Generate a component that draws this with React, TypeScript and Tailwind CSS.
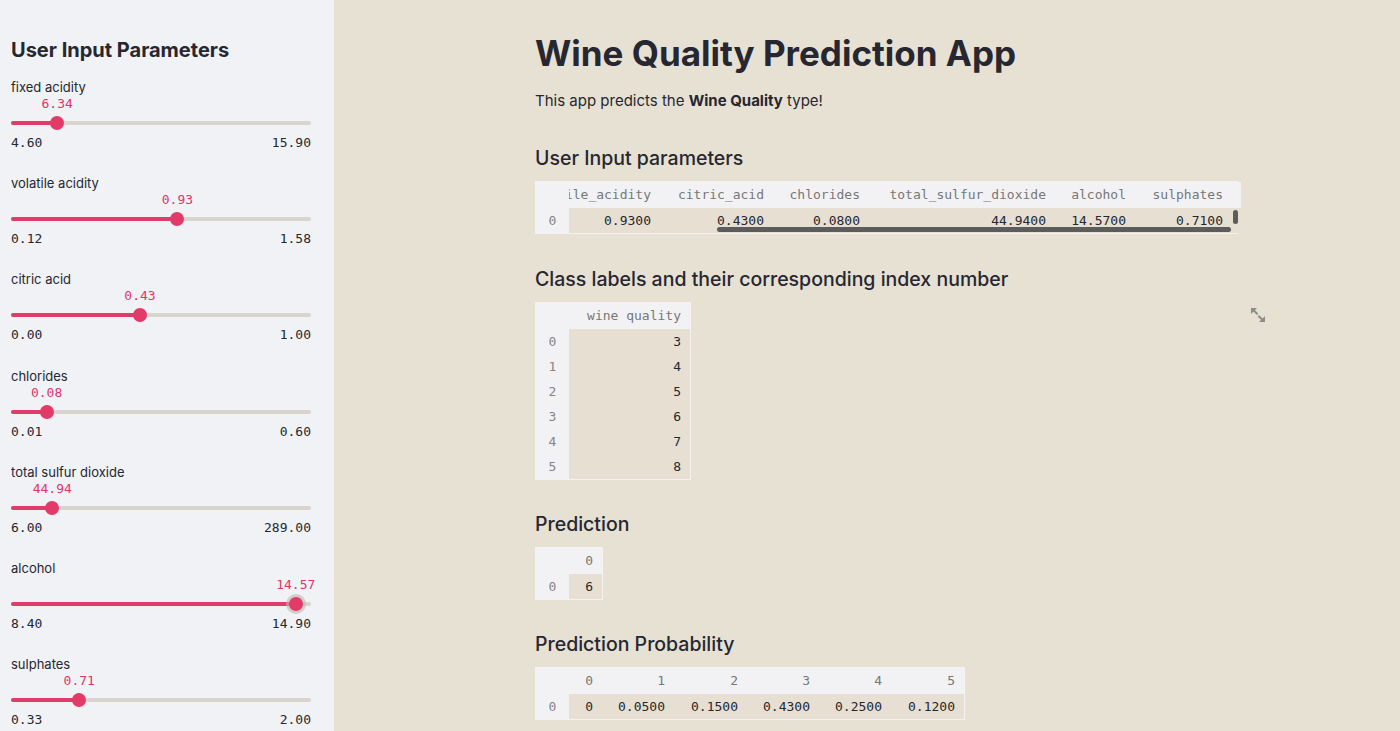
import React from "react";

const sans = { fontFamily: "Inter, 'Noto Sans', sans-serif" };
const mono = { fontFamily: "'DejaVu Sans Mono', 'Liberation Mono', monospace" };

type SliderProps = { label: string; min: number; max: number; value: number; focus?: boolean };

function Slider({ label, min, max, value, focus }: SliderProps) {
  const pct = ((value - min) / (max - min)) * 100;
  return (
    <div className="mb-[23.2px]">
      <div className="h-[19px] text-[13px] leading-[18px] text-[#262730]">{label}</div>
      <div className="relative h-[14px]">
        <span
          className="absolute top-0 -translate-x-1/2 whitespace-nowrap text-[13px] leading-[14px] text-[#e0356a]"
          style={{ ...mono, left: `${pct}%` }}
        >
          {value.toFixed(2)}
        </span>
      </div>
      <div className="relative h-[24px]">
        <div className="absolute left-0 right-0 top-[10px] h-[4px] rounded-full bg-[#d9d5cc]" />
        <div className="absolute left-0 top-[10px] h-[4px] rounded-full bg-[#e23b69]" style={{ width: `${pct}%` }} />
        <div
          className={
            "absolute top-[5px] h-[14px] w-[14px] -translate-x-1/2 rounded-full bg-[#e23b69]" +
            (focus ? " ring-[3px] ring-[#bdb6b0]/60" : "")
          }
          style={{ left: `${pct}%` }}
        />
      </div>
      <div className="flex h-[16px] justify-between text-[13px] leading-[16px] text-[#262730]" style={mono}>
        <span>{min.toFixed(2)}</span>
        <span>{max.toFixed(2)}</span>
      </div>
    </div>
  );
}

type Col = { w: number; head: string; vals: string[] };

function DataTable({ cols, index, extra }: { cols: Col[]; index: string[]; extra?: React.ReactNode }) {
  return (
    <div className="relative inline-flex border border-[#f4f3f1] text-[13px]" style={mono}>
      <div className="flex w-[33px] flex-col bg-[#f2f2f5]">
        <div className="h-[26px]" />
        {index.map((ix) => (
          <div key={ix} className="flex h-[25px] items-center justify-center text-[#858585]">
            {ix}
          </div>
        ))}
      </div>
      {cols.map((c, ci) => (
        <div key={ci} className="flex flex-col" style={{ width: c.w }}>
          <div className="flex h-[26px] items-center justify-end overflow-hidden whitespace-nowrap bg-[#f2f2f5] pr-[9px] text-[#777777]">
            {c.head}
          </div>
          {c.vals.map((v, vi) => (
            <div key={vi} className="flex h-[25px] items-center justify-end bg-[#e6dfd2] pr-[9px] text-[#262730]">
              {v}
            </div>
          ))}
        </div>
      ))}
      {extra}
    </div>
  );
}

function ExpandIcon() {
  return (
    <svg width="16" height="16" viewBox="0 0 16 16" fill="#8c8c8c">
      <polygon points="1,1 7,1 1,7" />
      <rect x="2.5" y="4.2" width="6" height="2" transform="rotate(45 5.5 5.2)" />
      <polygon points="15,15 9,15 15,9" />
      <rect x="7.5" y="9.8" width="6" height="2" transform="rotate(45 10.5 10.8)" />
    </svg>
  );
}

export default function App() {
  const sliders: SliderProps[] = [
    { label: "fixed acidity", min: 4.6, max: 15.9, value: 6.34 },
    { label: "volatile acidity", min: 0.12, max: 1.58, value: 0.93 },
    { label: "citric acid", min: 0, max: 1, value: 0.43 },
    { label: "chlorides", min: 0.01, max: 0.6, value: 0.08 },
    { label: "total sulfur dioxide", min: 6, max: 289, value: 44.94 },
    { label: "alcohol", min: 8.4, max: 14.9, value: 14.57, focus: true },
    { label: "sulphates", min: 0.33, max: 2, value: 0.71 },
  ];

  const inputCols: Col[] = [
    { w: 91, head: "volatile_acidity", vals: ["0.9300"] },
    { w: 113, head: "citric_acid", vals: ["0.4300"] },
    { w: 96, head: "chlorides", vals: ["0.0800"] },
    { w: 186, head: "total_sulfur_dioxide", vals: ["44.9400"] },
    { w: 80, head: "alcohol", vals: ["14.5700"] },
    { w: 97, head: "sulphates", vals: ["0.7100"] },
    { w: 5, head: "", vals: [""] },
  ];

  const probCols: Col[] = [
    { w: 33, head: "0", vals: ["0"] },
    { w: 72, head: "1", vals: ["0.0500"] },
    { w: 73, head: "2", vals: ["0.1500"] },
    { w: 72, head: "3", vals: ["0.4300"] },
    { w: 72, head: "4", vals: ["0.2500"] },
    { w: 73, head: "5", vals: ["0.1200"] },
  ];

  return (
    <div className="flex h-[731px] w-[1400px] overflow-hidden bg-[#e7e1d4] text-[#262730]" style={sans}>
      <aside className="h-full w-[334px] shrink-0 bg-[#f0f2f6] pl-[11px] pr-[23px] pt-[36px]">
        <h2 className="mb-[14px] text-[20px] font-bold leading-[28px]">User Input Parameters</h2>
        {sliders.map((s) => (
          <Slider key={s.label} {...s} />
        ))}
      </aside>

      <main className="flex-1 pl-[201px] pt-[31px]">
        <h1 className="text-[35px] font-bold leading-[44px]">Wine Quality Prediction App</h1>
        <p className="mt-[14px] text-[15px] leading-[24px]">
          This app predicts the <b>Wine Quality</b> type!
        </p>

        <h3 className="mt-[31px] text-[19.5px] font-medium leading-[28px]">User Input parameters</h3>
        <div className="mt-[9px]">
          <DataTable
            cols={inputCols}
            index={["0"]}
            extra={
              <>
                <div className="absolute left-[181px] top-[45px] h-[5px] w-[514px] rounded-full bg-[#5c5c5c]" />
                <div className="absolute left-[697px] top-[28px] h-[14px] w-[5px] rounded-full bg-[#5c5c5c]" />
              </>
            }
          />
        </div>

        <h3 className="mt-[31px] text-[19.5px] font-medium leading-[28px]">
          Class labels and their corresponding index number
        </h3>
        <div className="relative mt-[9px]">
          <DataTable
            cols={[{ w: 121, head: "wine quality", vals: ["3", "4", "5", "6", "7", "8"] }]}
            index={["0", "1", "2", "3", "4", "5"]}
          />
          <div className="absolute left-[715px] top-[5px]">
            <ExpandIcon />
          </div>
        </div>

        <h3 className="mt-[30px] text-[19.5px] font-medium leading-[28px]">Prediction</h3>
        <div className="mt-[9px]">
          <DataTable cols={[{ w: 33, head: "0", vals: ["6"] }]} index={["0"]} />
        </div>

        <h3 className="mt-[30px] text-[19.5px] font-medium leading-[28px]">Prediction Probability</h3>
        <div className="mt-[9px]">
          <DataTable cols={probCols} index={["0"]} />
        </div>
      </main>
    </div>
  );
}
